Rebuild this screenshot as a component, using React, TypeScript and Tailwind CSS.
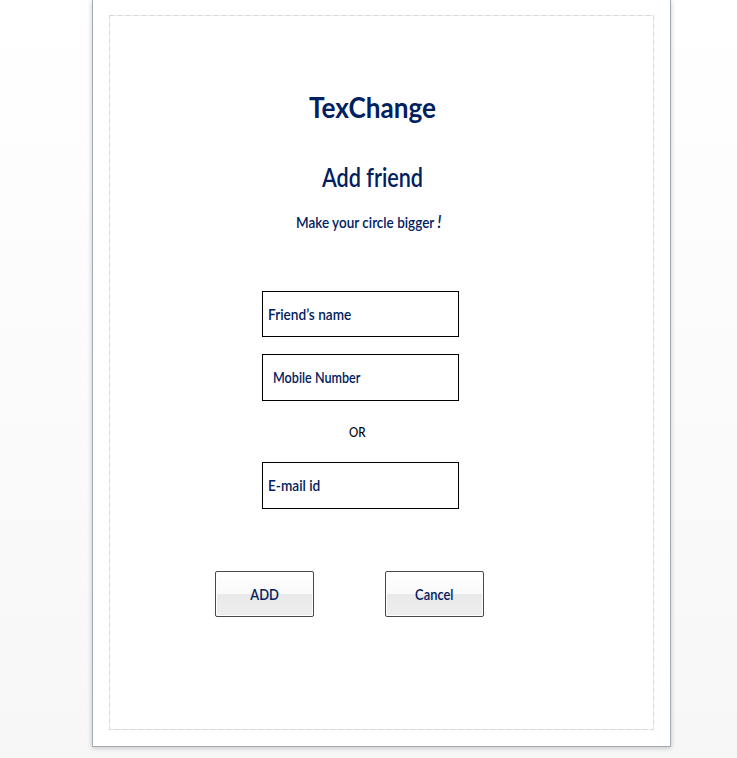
import React from 'react';

function Field({ label, className, labelClass }: { label: string; className: string; labelClass: string }) {
  return (
    <div className={`flex w-[197px] items-center border border-black bg-white text-[15px] font-semibold leading-none text-[#002060] ${className}`}>
      <span className={`inline-block origin-left whitespace-nowrap ${labelClass}`}>{label}</span>
    </div>
  );
}

function GlossyButton({ label }: { label: string }) {
  return (
    <button className="flex h-[46px] w-[99px] items-center justify-center rounded-[2px] border border-[#484848] bg-[linear-gradient(#ffffff_0%,#fafafa_50%,#e9e9e9_51%,#eeeeee_100%)] text-[15px] font-semibold leading-none text-[#002060] shadow-[inset_0_0_0_1px_#ffffff]">
      <span className="inline-block scale-x-[0.86]">{label}</span>
    </button>
  );
}

export default function App() {
  return (
    <div className="h-[758px] w-[737px] overflow-hidden bg-linear-to-b from-white to-[#f7f7f7] pl-[92px] font-['Lato','Open_Sans',sans-serif]">
      <main className="h-[747px] w-[579px] border-x border-b border-[#a4abb5] bg-white px-4 pt-[15px] shadow-[0_1px_5px_rgba(0,0,0,0.22)]">
        <section className="relative h-[715px] w-[545px]">
          <svg className="pointer-events-none absolute inset-0" width="545" height="715" fill="none">
            <rect x="0.5" y="0.5" width="544" height="714" stroke="#ededed" />
            <rect x="0.5" y="0.5" width="544" height="714" stroke="#d9d9d9" strokeDasharray="5 3" />
          </svg>
          <div className="flex flex-col pt-[74px] text-[#002060]">
            <h1 className="ml-[200px] h-9 origin-left scale-x-[0.9] whitespace-nowrap text-[29px] font-bold leading-9">TexChange</h1>
            <h2 className="ml-[213px] mt-[34px] h-9 origin-left scale-x-[0.83] whitespace-nowrap text-[26px] font-semibold leading-9">Add friend</h2>
            <p className="ml-[187px] mt-[17px] h-5 origin-left scale-x-[0.9] whitespace-nowrap text-[15px] font-semibold leading-5">
              Make your circle bigger <span className="text-[18px] italic leading-none">!</span>
            </p>
            <Field label="Friend’s name" className="ml-[153px] mt-[59px] h-[46px] pl-[5px]" labelClass="scale-x-[0.91]" />
            <Field label="Mobile Number" className="ml-[153px] mt-[17px] h-[47px] pl-[10px]" labelClass="scale-x-[0.84]" />
            <p className="ml-[240px] mt-[22px] h-[18px] origin-left scale-x-[0.89] text-[13px] font-medium leading-[18px] text-black">OR</p>
            <Field label="E-mail id" className="ml-[153px] mt-[21px] h-[47px] pl-[5px]" labelClass="scale-x-[0.91]" />
            <div className="ml-[106px] mt-[62px] flex gap-[71px]">
              <GlossyButton label="ADD" />
              <GlossyButton label="Cancel" />
            </div>
          </div>
        </section>
      </main>
    </div>
  );
}
